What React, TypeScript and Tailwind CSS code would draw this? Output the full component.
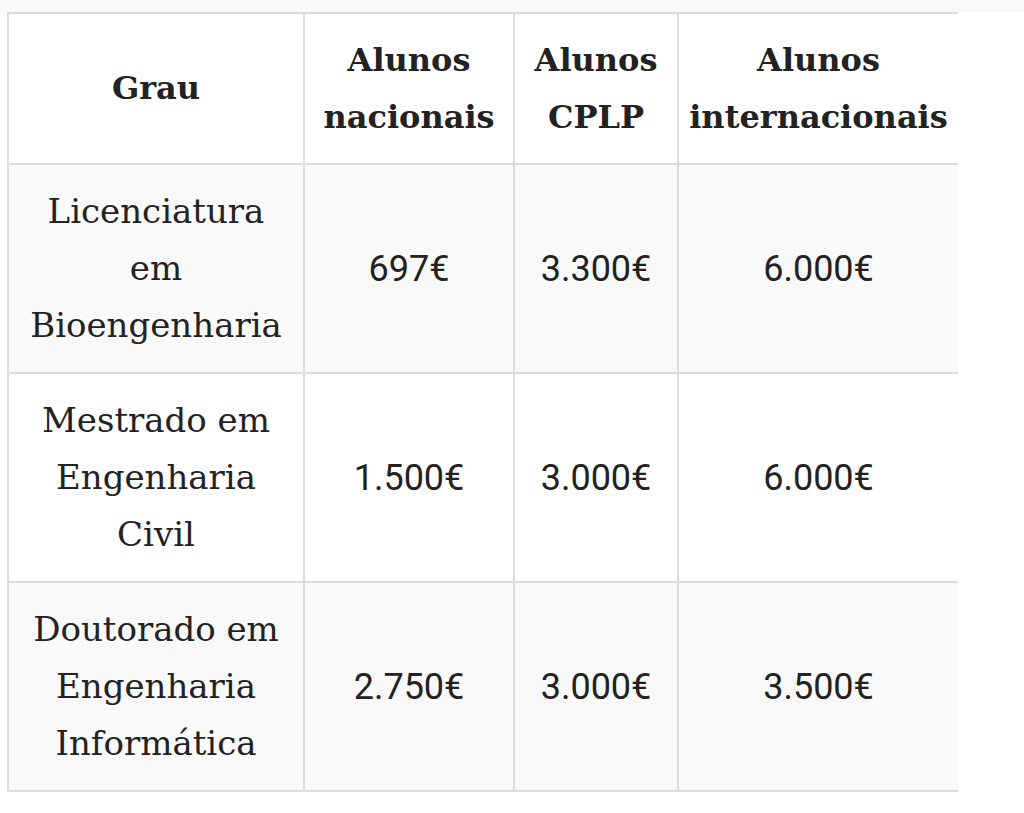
const rows = [
  { grau: ['Licenciatura', 'em', 'Bioengenharia'], nac: '697€', cplp: '3.300€', intl: '6.000€', striped: true },
  { grau: ['Mestrado em', 'Engenharia', 'Civil'], nac: '1.500€', cplp: '3.000€', intl: '6.000€', striped: false },
  { grau: ['Doutorado em', 'Engenharia', 'Informática'], nac: '2.750€', cplp: '3.000€', intl: '3.500€', striped: true },
];

const slab = { fontFamily: '"DejaVu Serif", "Liberation Serif", serif' };

export default function App() {
  return (
    <div className="min-h-[813px] w-[1024px] bg-white text-[#222]">
      <div className="h-[12px] bg-[#f8f8f8]" />
      <div className="pl-[7px]">
        <table className="table-fixed border-collapse text-center" style={{ width: 950 }}>
          <colgroup>
            <col className="w-[296px]" />
            <col className="w-[210px]" />
            <col className="w-[164px]" />
            <col className="w-[280px]" />
          </colgroup>
          <thead>
            <tr className="h-[151px] bg-white">
              {[['Grau'], ['Alunos', 'nacionais'], ['Alunos', 'CPLP'], ['Alunos', 'internacionais']].map((h, i) => (
                <th
                  key={i}
                  className={`border-2 border-[#dcdcdc] px-0 text-[32px] font-bold leading-[57px] ${i === 3 ? 'border-r-0' : ''}`}
                  style={slab}
                >
                  {h.map((l) => (
                    <div key={l} className="whitespace-nowrap">{l}</div>
                  ))}
                </th>
              ))}
            </tr>
          </thead>
          <tbody>
            {rows.map((r) => (
              <tr key={r.grau[0]} className={`h-[209px] ${r.striped ? 'bg-[#f9f9f9]' : 'bg-white'}`}>
                <td className="border-2 border-[#dcdcdc] px-0 text-[34px] leading-[57px]" style={slab}>
                  {r.grau.map((l) => (
                    <div key={l} className="whitespace-nowrap">{l}</div>
                  ))}
                </td>
                {[r.nac, r.cplp, r.intl].map((v, i) => (
                  <td
                    key={i}
                    className={`border-2 border-[#dcdcdc] font-['Roboto',sans-serif] text-[36px] ${i === 2 ? 'border-r-0' : ''}`}
                  >
                    {v}
                  </td>
                ))}
              </tr>
            ))}
          </tbody>
        </table>
      </div>
    </div>
  );
}
